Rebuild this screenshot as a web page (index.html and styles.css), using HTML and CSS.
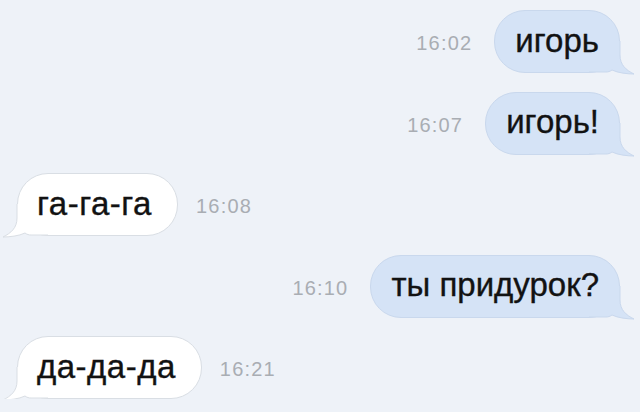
FILE: index.html
```html
<!DOCTYPE html>
<html lang="ru">
<head>
    <meta charset="UTF-8">
    <meta name="viewport" content="width=device-width, initial-scale=1.0">
    <title>Сообщения</title>
    <link rel="stylesheet" href="styles.css">
</head>
<body>

    <div class="chat">
        <div class="row out">
            <span class="time">16:02</span>
            <div class="bubble">
                <svg class="tail" width="45" height="34"><path class="tail-fill" d="M0 0H31V14C31 24 37 29 45 33C39 33 29 32 23 29C21 30.5 19 31 17 31H0Z"/><path class="tail-line" d="M31 0V14C31 24 37 29 45 33C39 33 29 32 23 29C21 30.5 19 31 17 31H0"/></svg>
                <span class="text">игорь</span>
            </div>
        </div>

        <div class="row out">
            <span class="time">16:07</span>
            <div class="bubble">
                <svg class="tail" width="45" height="34"><path class="tail-fill" d="M0 0H31V14C31 24 37 29 45 33C39 33 29 32 23 29C21 30.5 19 31 17 31H0Z"/><path class="tail-line" d="M31 0V14C31 24 37 29 45 33C39 33 29 32 23 29C21 30.5 19 31 17 31H0"/></svg>
                <span class="text">игорь!</span>
            </div>
        </div>

        <div class="row in">
            <div class="bubble">
                <svg class="tail" width="45" height="34"><path class="tail-fill" d="M0 0H31V14C31 24 37 29 45 33C39 33 29 32 23 29C21 30.5 19 31 17 31H0Z"/><path class="tail-line" d="M31 0V14C31 24 37 29 45 33C39 33 29 32 23 29C21 30.5 19 31 17 31H0"/></svg>
                <span class="text">га-га-га</span>
            </div>
            <span class="time">16:08</span>
        </div>

        <div class="row out">
            <span class="time">16:10</span>
            <div class="bubble">
                <svg class="tail" width="45" height="34"><path class="tail-fill" d="M0 0H31V14C31 24 37 29 45 33C39 33 29 32 23 29C21 30.5 19 31 17 31H0Z"/><path class="tail-line" d="M31 0V14C31 24 37 29 45 33C39 33 29 32 23 29C21 30.5 19 31 17 31H0"/></svg>
                <span class="text">ты придурок?</span>
            </div>
        </div>

        <div class="row in">
            <div class="bubble">
                <svg class="tail" width="45" height="34"><path class="tail-fill" d="M0 0H31V14C31 24 37 29 45 33C39 33 29 32 23 29C21 30.5 19 31 17 31H0Z"/><path class="tail-line" d="M31 0V14C31 24 37 29 45 33C39 33 29 32 23 29C21 30.5 19 31 17 31H0"/></svg>
                <span class="text">да-да-да</span>
            </div>
            <span class="time">16:21</span>
        </div>
    </div>

</body>
</html>
```

FILE: styles.css
```css
body {
    margin: 0;
    background-color: #eef2f8;
    font-family: "Liberation Sans", Arial, sans-serif;
    overflow: hidden;
}
.chat {
    display: flex;
    flex-direction: column;
    gap: 18.5px;
    padding: 10px 20px 0 17px;
}
.row {
    display: flex;
    align-items: center;
    gap: 22px;
}
.row.out {
    justify-content: flex-end;
}
.row.in {
    justify-content: flex-start;
    gap: 18px;
}
.time {
    font-size: 20px;
    letter-spacing: 1.2px;
    color: #a9adb3;
    padding-top: 4px;
}
.bubble {
    position: relative;
    height: 63px;
    box-sizing: border-box;
    display: flex;
    align-items: center;
    padding: 0 20px 2px;
    border-radius: 31px;
    font-size: 33px;
    color: #121212;
    -webkit-text-stroke: 0.35px #121212;
}
.bubble .text {
    position: relative;
}
.out .bubble {
    background-color: #d5e3f6;
    border: 1px solid #c9d8ed;
}
.in .bubble {
    background-color: #fff;
    border: 1px solid #d9dee4;
    padding: 0 25px 2px 19px;
    letter-spacing: 0.5px;
}

/* хвостик пузыря */
.tail {
    position: absolute;
    bottom: -3px;
    overflow: visible;
}
.out .tail {
    right: -15px;
}
.in .tail {
    left: -15px;
    transform: scaleX(-1);
}
.tail-line {
    fill: none;
    stroke-width: 1;
}
.out .tail-fill { fill: #d5e3f6; }
.out .tail-line { stroke: #c9d8ed; }
.in .tail-fill { fill: #fff; }
.in .tail-line { stroke: #d9dee4; }
```
